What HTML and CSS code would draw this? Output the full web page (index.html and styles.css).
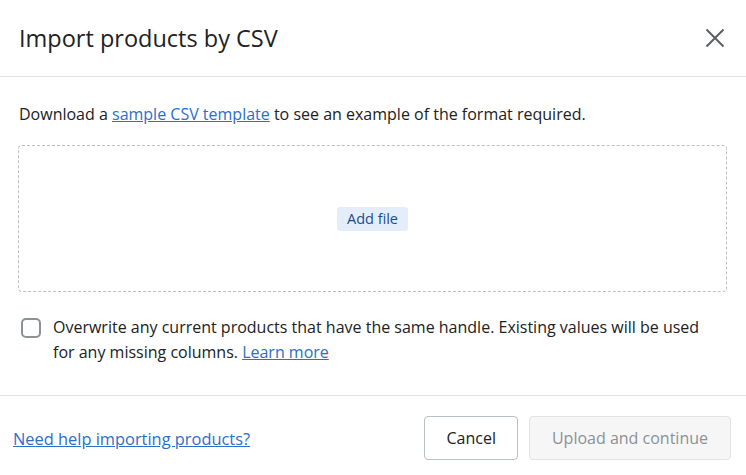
FILE: index.html
```html
<!DOCTYPE html>
<html lang="en">
<head>
<meta charset="UTF-8">
<meta name="viewport" content="width=device-width, initial-scale=1.0">
<title>Import products by CSV</title>
<link rel="stylesheet" href="styles.css">
</head>
<body>
<div class="modal">
  <div class="modal-header">
    <h1>Import products by CSV</h1>
    <button class="close-btn" aria-label="Close">
      <svg width="22" height="22" viewBox="0 0 22 22">
        <path d="M2.5 2.5 L19.5 19.5 M19.5 2.5 L2.5 19.5" stroke="#5c5f62" stroke-width="2" fill="none"/>
      </svg>
    </button>
  </div>

  <div class="modal-body">
    <p class="intro">Download a <a href="#">sample CSV template</a> to see an example of the format required.</p>

    <div class="dropzone">
      <span class="add-file">Add file</span>
    </div>

    <label class="overwrite">
      <span class="checkbox"></span>
      <span class="overwrite-text">Overwrite any current products that have the same handle. Existing values will be used for any missing columns. <a href="#">Learn more</a></span>
    </label>
  </div>

  <div class="modal-footer">
    <a href="#" class="help-link">Need help importing products?</a>
    <div class="actions">
      <button class="btn">Cancel</button>
      <button class="btn btn-disabled">Upload and continue</button>
    </div>
  </div>
</div>
</body>
</html>
```

FILE: styles.css
```css
body {
  margin: 0;
  font-family: "Open Sans", Arial, sans-serif;
  background-color: #fff;
  color: #202223;
}

.modal {
  width: 746px;
  height: 475px;
  background-color: #fff;
}

.modal-header {
  display: flex;
  align-items: center;
  justify-content: space-between;
  height: 77px;
  padding: 0 20px 0 19px;
  border-bottom: 1px solid #e1e3e5;
  box-sizing: border-box;
}

h1 {
  margin: 0;
  font-size: 23.5px;
  font-weight: 400;
  color: #202223;
}

.close-btn {
  border: none;
  background: none;
  padding: 0;
  width: 22px;
  height: 22px;
  cursor: pointer;
}

.modal-body {
  padding: 25px 19px 0 18px;
  height: 319px;
  box-sizing: border-box;
  border-bottom: 1px solid #e1e3e5;
}

.intro {
  margin: 0 0 19px 1px;
  font-size: 16px;
  line-height: 24px;
}

a {
  color: #2c6ecb;
  text-decoration: underline;
}

.dropzone {
  display: flex;
  align-items: center;
  justify-content: center;
  height: 147px;
  border: 1px dashed #babfc3;
  border-radius: 4px;
  box-sizing: border-box;
}

.add-file {
  background-color: #e4eefb;
  color: #1f4b86;
  font-size: 14.5px;
  font-weight: 500;
  line-height: 20px;
  padding: 2px 10px;
  border-radius: 3px;
}

.overwrite {
  display: flex;
  align-items: flex-start;
  gap: 12px;
  margin-top: 23px;
  padding-left: 3px;
}

.checkbox {
  flex: none;
  width: 20px;
  height: 20px;
  margin-top: 3px;
  border: 2px solid #8c9196;
  border-radius: 5px;
  box-sizing: border-box;
}

.overwrite-text {
  max-width: 660px;
  font-size: 16px;
  line-height: 25px;
}

.modal-footer {
  display: flex;
  align-items: center;
  justify-content: space-between;
  padding: 20px 15px 0 13px;
}

.help-link {
  font-size: 16.4px;
}

.actions {
  display: flex;
  gap: 11px;
}

.btn {
  height: 44px;
  padding: 0 21px;
  font-family: inherit;
  font-size: 16px;
  font-weight: 500;
  color: #202223;
  background-color: #fff;
  border: 1px solid #babfc3;
  border-radius: 4px;
}

.btn-disabled {
  padding: 0 22px;
  color: #8c9196;
  background-color: #f6f6f7;
  border-color: #e1e3e5;
}
```
